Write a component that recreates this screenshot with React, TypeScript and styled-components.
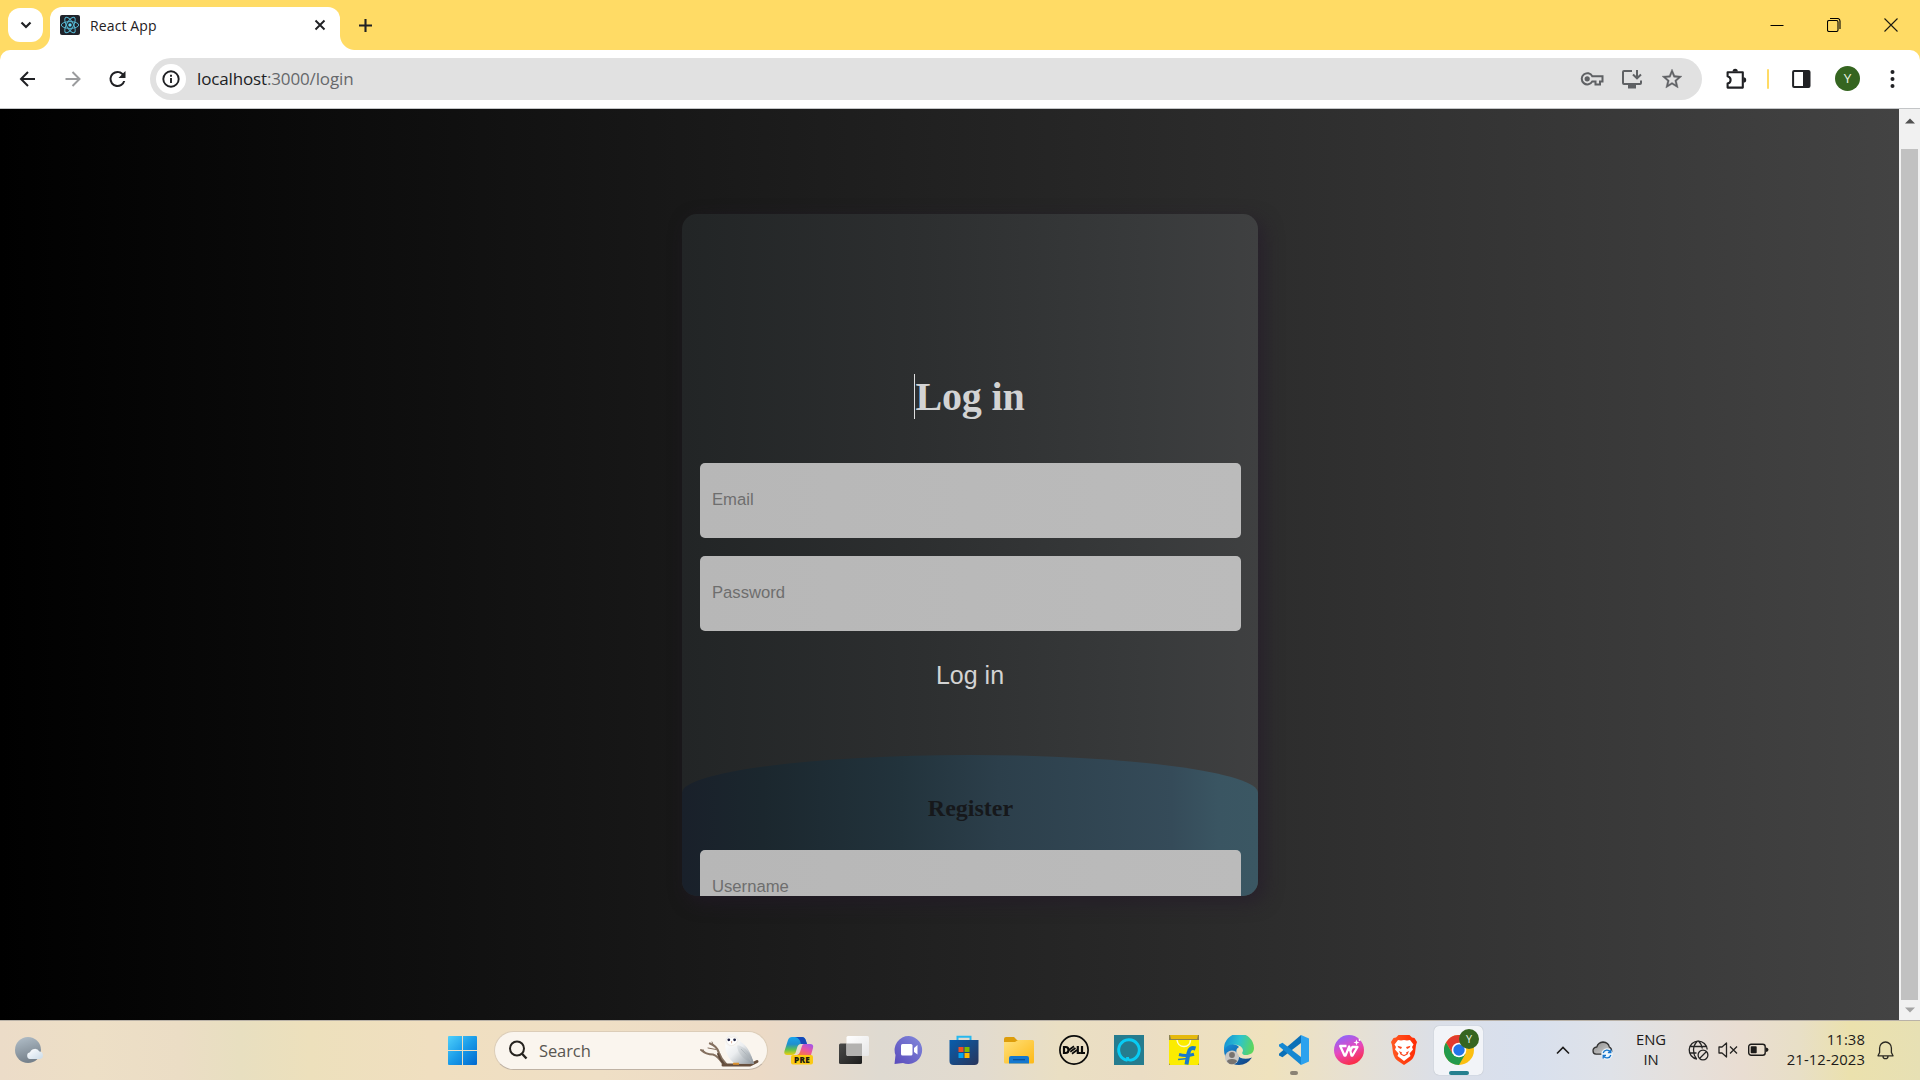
import React from 'react';
import styled, { createGlobalStyle } from 'styled-components';

const ui = '"Open Sans", "Noto Sans", sans-serif';

const GlobalStyle = createGlobalStyle`
  * { box-sizing: border-box; }
  html, body { margin: 0; padding: 0; overflow: hidden; }
  svg { display: block; flex: none; }
`;

const Screen = styled.div`
  width: 1920px;
  height: 1080px;
  display: flex;
  flex-direction: column;
  background: #000;
  font-family: ${ui};
`;

/* ---------- browser chrome ---------- */

const TabStrip = styled.header`
  height: 50px;
  display: flex;
  align-items: flex-start;
  background: #ffdb65;
  padding-left: 8px;
`;

const TabSearch = styled.button`
  width: 35px;
  height: 34px;
  margin: 8px 7px 0 0;
  padding: 0;
  border: 0;
  border-radius: 12px;
  background: #fff;
  display: grid;
  place-items: center;
`;

const Tab = styled.div`
  position: relative;
  width: 290px;
  height: 43px;
  margin-top: 7px;
  padding: 0 13px 7px 10px;
  display: flex;
  align-items: center;
  background: #fff;
  border-radius: 12px 12px 0 0;
  &::before, &::after {
    content: '';
    position: absolute;
    bottom: 0;
    width: 15px;
    height: 15px;
  }
  &::before {
    left: -15px;
    background: radial-gradient(circle at 0 0, transparent 14.5px, #fff 15.5px);
  }
  &::after {
    right: -15px;
    background: radial-gradient(circle at 100% 0, transparent 14.5px, #fff 15.5px);
  }
`;

const TabTitle = styled.span`
  flex: 1;
  margin-left: 10px;
  padding-top: 1px;
  font-size: 14px;
  line-height: 20px;
  letter-spacing: 0.12px;
  color: #1f2023;
`;

const NewTab = styled.div`
  margin: 18px 0 0 18px;
`;

const WindowControls = styled.div`
  margin-left: auto;
  height: 49px;
  display: flex;
  align-items: center;
  gap: 43px;
  padding-right: 22px;
`;

const ToolbarBack = styled.div`
  background: #ffdb65;
`;

const Toolbar = styled.div`
  height: 59px;
  display: flex;
  align-items: center;
  padding: 0 17px 1px 16px;
  background: #fff;
  border-bottom: 1px solid #c3c5c7;
  border-radius: 10px 10px 0 0;
`;

const NavIcons = styled.div`
  display: flex;
  gap: 21px;
  width: 134px;
`;

const Omnibox = styled.div`
  width: 1552px;
  height: 42px;
  border-radius: 21px;
  background: #e1e1e1;
  display: flex;
  align-items: center;
  padding: 0 18px 0 6px;
`;

const SiteInfo = styled.div`
  width: 30px;
  height: 30px;
  border-radius: 50%;
  background: #fff;
  display: grid;
  place-items: center;
`;

const Url = styled.span`
  flex: 1;
  margin-left: 11px;
  padding-top: 1px;
  font-size: 17px;
  line-height: 24px;
  letter-spacing: -0.14px;
  color: #66686b;
  b { font-weight: 400; color: #202124; }
`;

const OmniActions = styled.div`
  display: flex;
  align-items: center;
  gap: 17px;
`;

const ToolbarActions = styled.div`
  flex: 1;
  display: flex;
  align-items: center;
  padding-left: 23px;
`;

const ThemeDivider = styled.i`
  width: 2px;
  height: 20px;
  margin: 0 21px 0 20px;
  border-radius: 1px;
  background: #ffdb65;
`;

const Avatar = styled.span<{ $size: number }>`
  width: ${p => p.$size}px;
  height: ${p => p.$size}px;
  border-radius: 50%;
  background: #356520;
  color: #e9f3e2;
  font: 400 ${p => p.$size * 0.54}px/${p => p.$size}px ${ui};
  text-align: center;
`;

/* ---------- page ---------- */

const Viewport = styled.main`
  height: 911px;
  display: flex;
`;

const Page = styled.div`
  flex: 1;
  display: flex;
  justify-content: center;
  padding: 105px 0 0 41px;
  background: linear-gradient(to right, #000000, #434343);
`;

const Card = styled.section`
  width: 576px;
  height: 682px;
  display: flex;
  flex-direction: column;
  overflow: hidden;
  border-radius: 15px;
  background: linear-gradient(to right, #222526 0%, #2d2f30 42%, #383a3b 80%, #3f4041 100%);
  box-shadow: 6px 6px 18px rgba(36, 25, 43, 0.6);
`;

const LoginForm = styled.div`
  height: 541px;
  padding: 160px 17px 0 18px;
  display: flex;
  flex-direction: column;
  align-items: center;
  flex: none;
`;

const Title = styled.h1`
  margin: 0 2px 44px 0;
  border-left: 1px solid #dedede;
  height: 45px;
  font: 700 40px/45px "Liberation Serif", serif;
  letter-spacing: -0.15px;
  color: #d3d3d3;
`;

const Field = styled.div`
  align-self: stretch;
  height: 75px;
  margin-bottom: 18px;
  flex: none;
  padding-left: 12px;
  border-radius: 5px;
  background: linear-gradient(to right, #b7b7b7, #bbbbbb);
  font: 400 16.67px/73px "Liberation Sans", sans-serif;
  color: #6e6e6e;
`;

const Submit = styled.button`
  margin: 12px 1px 0 0;
  padding: 0;
  border: 0;
  background: none;
  font: 400 25px/29px "Liberation Sans", sans-serif;
  color: #d3d3d3;
`;

const RegisterForm = styled.div`
  height: 456px;
  flex: none;
  padding: 40px 17px 0 18px;
  border-radius: 50% / 38px;
  background: linear-gradient(to right, #19202a 0%, #1b272e 14%, #22333c 38%, #2c3f4b 55%, #354b59 85%, #3a5562 93%, #3b5763 100%);
`;

const Subtitle = styled.h2`
  margin: 0 0 28px;
  font: 700 24px/27px "Liberation Serif", serif;
  text-align: center;
  color: #16181b;
`;

const Scrollbar = styled.div`
  width: 21px;
  display: flex;
  flex-direction: column;
  align-items: center;
  padding: 9px 0 0;
  background: #f1f1f1;
`;

const Thumb = styled.div`
  width: 17px;
  height: 851px;
  margin: 25px 0 7px;
  background: #c1c1c1;
`;

/* ---------- taskbar ---------- */

const Taskbar = styled.footer`
  height: 60px;
  display: flex;
  align-items: center;
  padding-bottom: 1px;
  border-top: 1px solid #b9b2a8;
  background: linear-gradient(to right,
    #ecdcc8 0, #eddfc6 90px, #ebddc5 180px, #e8dfc0 240px, #ede0bc 310px,
    #f0dfc0 430px, #efdfc5 600px, #ecdac6 760px, #dfdad1 880px, #e2dbcf 980px,
    #eadfc3 1060px, #ebddc4 1140px, #efe2bd 1270px, #e6e0d4 1360px, #dbdfe8 1440px,
    #d8e0ee 1530px, #dfe2e8 1610px, #e5e0dc 1680px, #e9ddd2 1740px, #e8dfc6 1800px,
    #ebe1ad 1850px, #e7e0b4 1920px);
`;

const Weather = styled.div`
  width: 448px;
  padding-left: 15px;
`;

const SearchBox = styled.div`
  width: 274px;
  height: 39px;
  margin: 0 4px 0 17px;
  border: 1px solid #dccdb8;
  border-bottom-color: #bfb2a4;
  border-radius: 20px;
  background: #faf5ee;
  display: flex;
  align-items: center;
  padding: 0 7px 0 13px;
  overflow: hidden;
`;

const SearchText = styled.span`
  flex: 1;
  margin-left: 11px;
  font-size: 16.5px;
  letter-spacing: -0.1px;
  color: #595651;
`;

const AppSlot = styled.div<{ $active?: boolean; $mark?: string }>`
  position: relative;
  width: 49px;
  height: 49px;
  margin: 0 3px;
  border-radius: 5px;
  display: grid;
  place-items: center;
  background: ${p => (p.$active ? '#f2f4f8' : 'transparent')};
  box-shadow: ${p => (p.$active ? '0 0 1px #9aa0a8' : 'none')};
  &::after {
    content: '';
    display: ${p => (p.$mark ? 'block' : 'none')};
    position: absolute;
    bottom: 0;
    width: ${p => (p.$active ? 20 : 8)}px;
    height: 4px;
    border-radius: 2px;
    background: ${p => p.$mark};
  }
`;

const ProfileBadge = styled.span`
  position: absolute;
  left: 25px;
  top: 3px;
  display: flex;
`;

const AppRow = styled.nav`
  display: flex;
  margin-left: -1px;
`;

const Tray = styled.div`
  margin-left: auto;
  display: flex;
  align-items: center;
  padding-right: 26px;
`;

const TrayText = styled.div<{ $right?: boolean }>`
  font-size: 14.8px;
  line-height: 20px;
  text-align: ${p => (p.$right ? 'right' : 'center')};
  letter-spacing: ${p => (p.$right ? '0.1px' : '-0.1px')};
  color: #1d1b1a;
  white-space: nowrap;
  width: ${p => (p.$right ? 90 : 40)}px;
  padding-bottom: 2px;
  span { display: block; }
`;

const Gap = styled.i<{ $w: number }>`
  width: ${p => p.$w}px;
`;

/* ---------- drawings ---------- */

const ReactIcon = () => (
  <svg width="20" height="20" viewBox="0 0 20 20">
    <rect width="20" height="20" rx="2" fill="#20232a" />
    <g fill="none" stroke="#55b5cf" strokeWidth="1">
      <ellipse cx="10" cy="10" rx="8.7" ry="3.4" />
      <ellipse cx="10" cy="10" rx="8.7" ry="3.4" transform="rotate(60 10 10)" />
      <ellipse cx="10" cy="10" rx="8.7" ry="3.4" transform="rotate(120 10 10)" />
    </g>
    <circle cx="10" cy="10" r="1.7" fill="#61dafb" />
  </svg>
);

const Line = ({ d, w, h, s = 2, c = '#202124' }: { d: string; w: number; h: number; s?: number; c?: string }) => (
  <svg width={w} height={h} viewBox={`0 0 ${w} ${h}`} fill="none" stroke={c} strokeWidth={s}>
    <path d={d} />
  </svg>
);

const Reload = () => (
  <svg width="24" height="24" viewBox="0 0 24 24" fill="#202124">
    <path d="M17.15 6.35A7.96 7.96 0 0 0 11.500 4a8 8 0 1 0 7.73 10h-2.08A6 6 0 1 1 11.500 6c1.66 0 3.14.69 4.22 1.78L12.500 11h7V4z" />
  </svg>
);

const Info = () => (
  <svg width="18" height="18" viewBox="0 0 18 18">
    <circle cx="9" cy="9" r="7.7" fill="none" stroke="#202124" strokeWidth="1.9" />
    <path d="M9 8v5M9 4.8v2" stroke="#202124" strokeWidth="1.9" />
  </svg>
);

const KeyIcon = () => (
  <svg width="24" height="16" viewBox="0 0 24 16" fill="none" stroke="#5f6164" strokeWidth="2">
    <path d="M12.3 5.200A5.600 5.600 0 1 0 12.300 10.400H15.500V13.400H20V10.400H22.500V5.200Z" />
    <circle cx="7.200" cy="7.800" r="2.600" fill="#5f6164" stroke="none" />
  </svg>
);

const Install = () => (
  <svg width="22" height="20" viewBox="0 0 22 20" fill="none" stroke="#5f6164" strokeWidth="2">
    <path d="M11 2H3Q2 2 2 3V14Q2 15 3 15H19Q20 15 20 14V11.5" />
    <path d="M16 1V9M12 5.5L16 9.3L20 5.5" />
    <path d="M7 17.5H15" strokeWidth="4" />
  </svg>
);

const Star = () => (
  <svg width="24" height="24" viewBox="0 0 24 24" fill="#5f6164" stroke="#5f6164" strokeWidth=".35">
    <path d="M22 9.24l-7.19-.62L12 2 9.19 8.63 2 9.24l5.46 4.73L5.82 21 12 17.27 18.18 21l-1.63-7.03L22 9.24zM12 15.4l-3.76 2.27 1-4.28-3.32-2.88 4.38-.38L12 6.1l1.71 4.04 4.38.38-3.32 2.88 1 4.28L12 15.4z" />
  </svg>
);

const Puzzle = () => (
  <svg width="22" height="22" viewBox="0 0 22 22">
    <path d="M2.600 4.200H17.800V19.600H2.600V15.600Q5.600 14.600 5.600 11.900T2.600 8.200Z" fill="none" stroke="#202124" strokeWidth="2.100" strokeLinejoin="round" />
    <path d="M7.600 3.500a2.600 2.700 0 0 1 5.200 0zM18.500 9.300a2.700 2.600 0 0 1 0 5.200z" fill="#202124" />
  </svg>
);

const SidePanel = () => (
  <svg width="19" height="18" viewBox="0 0 19 18">
    <rect x="1.1" y="1.1" width="16.4" height="15.8" rx="1" fill="none" stroke="#202124" strokeWidth="2" />
    <path d="M11 1H18V17H11Z" fill="#202124" />
  </svg>
);

const WindowsLogo = () => (
  <svg width="29" height="29" viewBox="0 0 29 29">
    <defs>
      <linearGradient id="win" x1="0" y1="0" x2="1" y2="1" gradientUnits="objectBoundingBox">
        <stop offset="0" stopColor="#4fd0fb" />
        <stop offset=".5" stopColor="#1a9be8" />
        <stop offset="1" stopColor="#0068cf" />
      </linearGradient>
    </defs>
    <path d="M1 0H14V14H0V1Q0 0 1 0ZM15 0H28Q29 0 29 1V14H15ZM0 15H14V29H1Q0 29 0 28ZM15 15H29V28Q29 29 28 29H15Z" fill="url(#win)" />
  </svg>
);

const WeatherIcon = () => (
  <svg width="30" height="28" viewBox="0 0 30 28">
    <defs>
      <linearGradient id="moon" x1="0" y1="0" x2=".3" y2="1">
        <stop offset="0" stopColor="#b3c0ca" />
        <stop offset="1" stopColor="#77828c" />
      </linearGradient>
      <linearGradient id="cl" x1="0" y1="0" x2="1" y2="1">
        <stop offset="0" stopColor="#fff" />
        <stop offset="1" stopColor="#cbdbe8" />
      </linearGradient>
    </defs>
    <circle cx="13" cy="14" r="13" fill="url(#moon)" />
    <path d="M15 23a3.400 3.400 0 0 1 0-6.700A5.200 5.200 0 0 1 24.400 15.500A3.800 3.800 0 0 1 25 23Z" fill="url(#cl)" />
  </svg>
);

const Owl = () => (
  <svg width="60" height="35" viewBox="0 0 60 35">
    <defs>
      <linearGradient id="owl" x1="0" y1="0" x2="1" y2=".8">
        <stop offset="0" stopColor="#ffffff" />
        <stop offset=".45" stopColor="#eceef0" />
        <stop offset="1" stopColor="#9aa3ab" />
      </linearGradient>
      <linearGradient id="owlWing" x1="0" y1="0" x2="1" y2="1">
        <stop offset="0" stopColor="#e6e9eb" />
        <stop offset="1" stopColor="#8d969e" />
      </linearGradient>
    </defs>
    <g fill="none" stroke="#84705f" strokeLinecap="round">
      <path d="M1 17Q6 21.500 13 21.500Q18 23 23 31" strokeWidth="1.900" />
      <path d="M10 10.500Q17 13 19 20Q21 26 26 31" strokeWidth="2.300" />
      <path d="M5 20L3 16.500M13.500 12.500L12 9M8 15L16 16.500" strokeWidth="1" />
      <path d="M18 21Q20 27 24 31" stroke="#5d4838" strokeWidth="2" />
      <path d="M23 32H50L57 28.500" strokeWidth="3" stroke="#68503e" />
    </g>
    <path d="M25.500 10C27 12 38 12 40 8.500C47 12 51 20 54 31C47 30 42 31.500 35 30.500C28 26 24.500 18 25.500 10Z" fill="url(#owl)" />
    <path d="M37 12C45 13 52 22 54 31C46 28.500 37 21 37 12Z" fill="url(#owlWing)" />
    <path d="M41 16Q47 21 51 28" fill="none" stroke="#aeb5ba" strokeWidth=".8" />
    <path d="M25 8Q25.500 1 32 1Q39 1 40.500 8.500Q38 14 32 14Q26 14 25 8Z" fill="#f6f5f3" />
    <path d="M26 7Q27.500 2.500 31.500 4.500Q35.500 2.500 38 7Q36 12 31.500 12.500Q27 12 26 7Z" fill="#fff" stroke="#e3dcd5" strokeWidth=".5" />
    <circle cx="28.800" cy="6.800" r="1.400" fill="#1d2140" />
    <circle cx="34.600" cy="6.800" r="1.400" fill="#1d2140" />
    <path d="M31.600 8v2.300" stroke="#d9b29e" />
    <path d="M33 30.700H39" stroke="#dc9230" strokeWidth="2" />
  </svg>
);

const Copilot = () => (
  <svg width="30" height="30" viewBox="0 0 30 30">
    <defs>
      <linearGradient id="cpA" x1="0" y1="0" x2="0" y2="1">
        <stop offset="0" stopColor="#17a5ec" /><stop offset=".4" stopColor="#1f8fce" /><stop offset=".7" stopColor="#5fc04f" /><stop offset="1" stopColor="#f2cf0e" />
      </linearGradient>
      <linearGradient id="cpB" x1=".8" y1="0" x2=".2" y2="1">
        <stop offset="0" stopColor="#a455e8" /><stop offset=".5" stopColor="#e955a2" /><stop offset="1" stopColor="#fb7a3c" />
      </linearGradient>
    </defs>
    <path d="M8 2H18Q21 2 22 6L23 9H17Q14 9 13 13L11.500 18Q10.500 20 8 20H3Q-.5 20 .5 16L4 5Q5 2 8 2Z" fill="url(#cpA)" />
    <path d="M11 2H18Q21 2 22 6L23 9H17Q16 3 11 2Z" fill="#1649b8" />
    <path d="M20 9H26Q30 9 29 13L27 20H13Q15 20 16 17L18 11Q18.500 9 20 9Z" fill="url(#cpB)" />
    <rect x="7" y="20" width="22" height="9.500" rx="2" fill="#fbc914" />
    <text x="18" y="27.900" textAnchor="middle" fontFamily="Open Sans, sans-serif" fontWeight="800" fontSize="8.200" letterSpacing=".2" fill="#201b10">PRE</text>
  </svg>
);

const TaskView = () => (
  <svg width="30" height="30" viewBox="0 0 30 30">
    <defs>
      <linearGradient id="tvD" x1="0" y1="0" x2="1" y2="1"><stop offset="0" stopColor="#4b4b4a" /><stop offset="1" stopColor="#1d1d1d" /></linearGradient>
      <linearGradient id="tvL" x1="0" y1="0" x2="1" y2="1"><stop offset="0" stopColor="#fff" /><stop offset="1" stopColor="#e6e6e6" /></linearGradient>
    </defs>
    <rect x="0" y="8.500" width="23" height="20.500" rx="1.500" fill="url(#tvD)" />
    <rect x="7.500" y="1" width="22.500" height="20" rx="1.500" fill="url(#tvL)" />
    <path d="M7.500 8.500H23V21H9Q7.500 21 7.500 19.500Z" fill="#b3b2b0" />
  </svg>
);

const Chat = () => (
  <svg width="30" height="30" viewBox="0 0 30 30">
    <defs><linearGradient id="chat" x1="1" y1="0" x2="0" y2="1"><stop offset="0" stopColor="#8289dc" /><stop offset="1" stopColor="#5a4bbb" /></linearGradient></defs>
    <path d="M15 1A14 14 0 1 1 9 28L.5 29L1.500 20A14 14 0 0 1 15 1Z" fill="url(#chat)" />
    <rect x="7" y="9" width="11.500" height="11.500" rx="1.500" fill="#fff" />
    <path d="M20 13L23.500 10V19.500L20 17Z" fill="#fff" />
  </svg>
);

const Store = () => (
  <svg width="30" height="30" viewBox="0 0 30 30">
    <defs><linearGradient id="store" x1="0" y1="0" x2="1" y2="1"><stop offset="0" stopColor="#075eae" /><stop offset="1" stopColor="#29355b" /></linearGradient></defs>
    <path d="M8.500 6V1.800H21.500V6" fill="none" stroke="#28b8ee" strokeWidth="2" />
    <path d="M.5 5H29.500V26Q29.500 30 25.500 30H4.500Q.5 30 .5 26Z" fill="url(#store)" />
    <path d="M9.500 12H14.500V17H9.500Z" fill="#f25022" /><path d="M15.500 12H20.500V17H15.500Z" fill="#7fba00" />
    <path d="M9.500 18H14.500V23H9.500Z" fill="#00a4ef" /><path d="M15.500 18H20.500V23H15.500Z" fill="#ffb900" />
  </svg>
);

const Explorer = () => (
  <svg width="30" height="30" viewBox="0 0 30 30">
    <defs><linearGradient id="fold" x1="0" y1="0" x2="1" y2="1"><stop offset="0" stopColor="#ffe07a" /><stop offset="1" stopColor="#fdb916" /></linearGradient></defs>
    <path d="M0 4Q0 2 2 2H10L13 5H28V12H0Z" fill="#dd9d0b" />
    <path d="M0 7H11L14 5H28.500Q30 5 30 6.500V27Q30 28.500 28.500 28.500H1.500Q0 28.500 0 27Z" fill="url(#fold)" />
    <path d="M5 28.500V23Q5 21 7 21H23Q25 21 25 23V28.500Z" fill="#1478cf" />
    <path d="M9 24.700H21" stroke="#0b4f94" strokeWidth="1.200" />
  </svg>
);

const Dell = () => (
  <svg width="30" height="30" viewBox="0 0 30 30">
    <circle cx="15" cy="15" r="14.100" fill="none" stroke="#0b0b0a" strokeWidth="1.700" />
    <g fill="none" stroke="#0b0b0a" strokeWidth="2.200">
      <path d="M5 12V18H6.500Q9.500 18 9.500 15T6.500 12Z" />
      <path d="M9.500 15.200L15 11.200M11.300 16.800L16.500 13M13 18.800L18 15" strokeWidth="1.700" />
      <path d="M18.800 11V18H21.800M23 11V18H26" />
    </g>
  </svg>
);

const Alexa = () => (
  <svg width="30" height="30" viewBox="0 0 30 30">
    <rect width="30" height="30" fill="#257c8f" />
    <path d="M13.500 25.200A10.300 10.300 0 1 1 17 25.100Q13.500 25.500 13.500 22" fill="none" stroke="#08ccf4" strokeWidth="2.900" />
  </svg>
);

const Flipkart = () => (
  <svg width="30" height="30" viewBox="0 0 30 30">
    <rect width="30" height="30" fill="#8c8250" />
    <path d="M1 0H29L28 4H2Z" fill="#e5b90d" /><path d="M0 5H30V28L29 30H1L0 28Z" fill="#fbec00" />
    <path d="M8 5Q9 11.500 15 11.500T21.500 5" fill="none" stroke="#fffbd0" strokeWidth="1.500" />
    <path d="M26.500 13.500Q20.500 11.500 19.500 18L17.500 29.500" fill="none" stroke="#1979c9" strokeWidth="4" />
    <path d="M10 19.500Q17 21.500 25 19.200" fill="none" stroke="#1979c9" strokeWidth="3" />
    <path d="M9 24.500L19 23.500" stroke="#1979c9" strokeWidth="1.600" />
  </svg>
);

const Edge = () => (
  <svg width="30" height="30" viewBox="0 0 30 30">
    <defs>
      <linearGradient id="edA" x1="0" y1=".3" x2="1" y2=".5"><stop offset="0" stopColor="#1690d4" /><stop offset=".5" stopColor="#2cc3cf" /><stop offset="1" stopColor="#5ed65b" /></linearGradient>
      <linearGradient id="edB" x1="0" y1="0" x2="1" y2="1"><stop offset="0" stopColor="#1791dc" /><stop offset="1" stopColor="#123c7c" /></linearGradient>
    </defs>
    <path d="M0 14A15 15 0 0 1 30 13C30 18 26 20 22 20C18 20 17.500 18 19 16C19 11 13 9 9 10Q3 11 0 16Z" fill="url(#edA)" />
    <path d="M0 15C3 9 11 8 15 12Q11 14 13 19C15 24 22 25 28 22.500Q23 30 15 30C6 30 0 23 0 15Z" fill="url(#edB)" />
    <circle cx="8" cy="22.500" r="7" fill="#c9c8c5" />
    <circle cx="8" cy="20" r="2.900" fill="#77736f" />
    <path d="M3 26.500Q3 24 8 24T13 26.500Q11 29.200 8 29.300T3 26.500Z" fill="#77736f" />
  </svg>
);

const VSCode = () => (
  <svg width="30" height="30" viewBox="0 0 30 30">
    <path d="M22 0L22 8L3.500 22.300L0 20.500V18.700Z" fill="#0b70b7" />
    <path d="M22 30V22L3.500 7.700L0 9.500V11.300Z" fill="#1688d2" />
    <path d="M22 0L30 3.500V26.500L22 30Z" fill="#2da2ee" />
  </svg>
);

const Wps = () => (
  <svg width="30" height="30" viewBox="0 0 30 30">
    <defs><linearGradient id="wps" x1=".2" y1="0" x2=".6" y2="1"><stop offset="0" stopColor="#8768ff" /><stop offset=".5" stopColor="#e548c0" /><stop offset="1" stopColor="#fc2c40" /></linearGradient></defs>
    <circle cx="15" cy="15" r="15" fill="url(#wps)" />
    <path d="M12.500 11H6.200L10.500 20.500H11.500L15.200 11.500L17.500 20.500H18.500L23.500 12H18.300L16.500 15.500" fill="none" stroke="#fff" strokeWidth="2.300" strokeLinejoin="round" />
    <path d="M22.500 4.500L23.300 6.700L25.500 7.500L23.300 8.300L22.500 10.500L21.700 8.300L19.500 7.500L21.700 6.700Z" fill="#fff" />
    <circle cx="25.500" cy="5" r=".9" fill="#fff" />
  </svg>
);

const Brave = () => (
  <svg width="26" height="30" viewBox="0 0 26 30">
    <defs><linearGradient id="brave" x1="0" y1="0" x2="1" y2="0"><stop offset="0" stopColor="#ff5a23" /><stop offset="1" stopColor="#ff2a03" /></linearGradient></defs>
    <path d="M7.500 0H18.500L21 2.500L23.500 3L26 7L25 10L24 18Q23 23 19 26L13 30L7 26Q3 23 2 18L1 10L0 7L2.500 3L5 2.500Z" fill="url(#brave)" />
    <path d="M7 5L10 5.500L13 5L16 5.500L19 5L22.500 9.500L21 12L22 14.500L18.500 18.500L19.500 21L13 26L6.500 21L7.500 18.500L4 14.500L5 12L3.500 9.500Z" fill="#fff" />
    <path d="M6.500 10.800L11 12L10 14L7.500 12.800ZM19.500 10.800L15 12L16 14L18.500 12.800ZM8 16L11 17.500L10.500 18.800L13 20L15.500 18.800L15 17.500L18 16L16.500 19.500L13 21.300L9.500 19.500Z" fill="#fb4820" />
  </svg>
);

const Chrome = () => (
  <svg width="30" height="30" viewBox="0 0 30 30">
    <circle cx="15" cy="15" r="15" fill="#fbbf12" />
    <path d="M2 7.500A15 15 0 0 1 28 7.500L15 7.800L8.500 18.700Z" fill="#e23b2e" />
    <path d="M2 7.500A15 15 0 0 0 15 30L21.500 18.700H8.500Z" fill="#229a4c" />
    <circle cx="15" cy="15" r="7.300" fill="#fff" />
    <circle cx="15" cy="15" r="5.700" fill="#2275e8" />
  </svg>
);

const OneDrive = () => (
  <svg width="21" height="20" viewBox="0 0 21 20">
    <defs><linearGradient id="od" x1="0" y1="0" x2="1" y2="1"><stop offset="0" stopColor="#8b8b8b" /><stop offset="1" stopColor="#d5d5d5" /></linearGradient></defs>
    <path d="M4 14.200Q1 14 1 10.800Q1 7.500 4.800 7Q6 2.500 11 2Q16.500 2.500 17.300 7Q19.700 8 19.700 11.500L14 14.200Z" fill="url(#od)" stroke="#333" strokeWidth="1.300" />
    <circle cx="15" cy="14" r="5.700" fill="#eef6fc" />
    <path d="M11.200 13A4 4 0 0 1 18.500 12M18.800 15A4 4 0 0 1 11.500 16M18.800 9.500V12.500H15.900M11.200 18.500V15.500H14" fill="none" stroke="#1675cc" strokeWidth="1.300" />
  </svg>
);

const Globe = () => (
  <svg width="21" height="21" viewBox="0 0 21 21" fill="none" stroke="#242424" strokeWidth="1.300">
    <path d="M9 19A9 9 0 1 1 19.200 9.500M9.500 1Q5.500 5 5.500 10T8.500 19M10.500 1Q14 4.500 14.300 8.500M1.800 6.500H18.300M1.800 13H8.500" />
    <circle cx="15" cy="15" r="4.900" />
    <path d="M11.500 18.500L18.500 11.500" />
  </svg>
);

const Mute = () => (
  <svg width="20" height="18" viewBox="0 0 20 18" fill="none" stroke="#262422" strokeWidth="1.300">
    <path d="M1 6H4L8.500 2V16L4 12H1Z" strokeLinejoin="round" />
    <path d="M12 5.500L19 12.500M19 5.500L12 12.500" />
  </svg>
);

const Battery = () => (
  <svg width="21" height="14" viewBox="0 0 21 14">
    <rect x=".7" y="1.200" width="16.500" height="11" rx="2.500" fill="none" stroke="#1d1b1a" strokeWidth="1.400" />
    <rect x="2.700" y="3.200" width="6" height="7" rx=".8" fill="#1d1b1a" />
    <path d="M18 4.500Q20.500 5 20.500 6.700T18 9Z" fill="#1d1b1a" />
  </svg>
);

const Bell = () => (
  <svg width="17" height="19" viewBox="0 0 17 19" fill="none" stroke="#2b2922" strokeWidth="1.300">
    <path d="M1 14.800L2.600 11.500V7A5.900 6 0 0 1 14.400 7V11.500L16 14.800ZM6 15.200A2.500 2.500 0 0 0 11 15.200" strokeLinejoin="round" />
  </svg>
);

const apps: { icon: React.ReactNode; mark?: string; active?: boolean }[] = [
  { icon: <Copilot /> }, { icon: <TaskView /> }, { icon: <Chat /> }, { icon: <Store /> },
  { icon: <Explorer /> }, { icon: <Dell /> }, { icon: <Alexa /> }, { icon: <Flipkart /> },
  { icon: <Edge /> }, { icon: <VSCode />, mark: '#8a8274' }, { icon: <Wps /> }, { icon: <Brave /> },
  { icon: <Chrome />, mark: '#25808f', active: true },
];

export default function App() {
  return (
    <Screen>
      <GlobalStyle />
      <TabStrip>
        <TabSearch><Line w={12} h={10} d="M1.500 2.500L6 7L10.500 2.500" s={2.2} /></TabSearch>
        <Tab>
          <ReactIcon />
          <TabTitle>React App</TabTitle>
          <Line w={14} h={14} d="M2.500 2.500L11.500 11.500M11.500 2.500L2.500 11.500" s={1.9} />
        </Tab>
        <NewTab><Line w={15} h={15} d="M7.500 1V14M1 7.500H14" s={2.1} /></NewTab>
        <WindowControls>
          <Line w={14} h={14} d="M0.500 7.500H13.500" s={1} c="#000" />
          <Line w={14} h={14} d="M0.500 4Q.5 2.500 2 2.500H9.500Q11 2.500 11 4V12Q11 13.500 9.500 13.500H2Q.5 13.500 .5 12ZM3 .5H10.500Q13 .5 13 3V11" s={1.1} c="#000" />
          <Line w={14} h={14} d="M.5 .5L13.500 13.500M13.500 .5L.5 13.500" s={1.1} c="#1b1a12" />
        </WindowControls>
      </TabStrip>
      <ToolbarBack>
        <Toolbar>
          <NavIcons>
            <Line w={24} h={24} d="M19 12H5.500M12 5L5 12L12 19" />
            <Line w={24} h={24} d="M4.500 12H18M11.500 5L18.500 12L11.500 19" c="#9b9c9e" />
            <Reload />
          </NavIcons>
          <Omnibox>
            <SiteInfo><Info /></SiteInfo>
            <Url><b>localhost</b>:3000/login</Url>
            <OmniActions><KeyIcon /><Install /><Star /></OmniActions>
          </Omnibox>
          <ToolbarActions>
            <Puzzle />
            <ThemeDivider />
            <Gap $w={2} />
            <SidePanel />
            <Gap $w={24} />
            <Avatar $size={25}>Y</Avatar>
            <Gap $w={30} />
            <svg width="5" height="20" viewBox="0 0 5 20" fill="#202124">
              <circle cx="2.500" cy="3" r="2" /><circle cx="2.500" cy="10" r="2" /><circle cx="2.500" cy="17" r="2" />
            </svg>
          </ToolbarActions>
        </Toolbar>
      </ToolbarBack>

      <Viewport>
        <Page>
          <Card>
            <LoginForm>
              <Title>Log in</Title>
              <Field>Email</Field>
              <Field>Password</Field>
              <Submit>Log in</Submit>
            </LoginForm>
            <RegisterForm>
              <Subtitle>Register</Subtitle>
              <Field>Username</Field>
            </RegisterForm>
          </Card>
        </Page>
        <Scrollbar>
          <svg width="10" height="6" viewBox="0 0 10 6"><path d="M0 5.500L5 .5L10 5.500Z" fill="#505050" /></svg>
          <Thumb />
          <svg width="10" height="6" viewBox="0 0 10 6"><path d="M0 .5L5 5.500L10 .5Z" fill="#a3a3a3" /></svg>
        </Scrollbar>
      </Viewport>

      <Taskbar>
        <Weather><WeatherIcon /></Weather>
        <WindowsLogo />
        <SearchBox>
          <svg width="20" height="20" viewBox="0 0 20 20" fill="none" stroke="#26231f" strokeWidth="2">
            <circle cx="9" cy="8.500" r="7" /><path d="M13.800 13.500L18.500 18.500" strokeWidth="2.400" />
          </svg>
          <SearchText>Search</SearchText>
          <Owl />
        </SearchBox>
        <AppRow>
          {apps.map((a, i) => (
            <AppSlot key={i} $active={a.active} $mark={a.mark}>
              {a.icon}
              {a.active && <ProfileBadge><Avatar $size={20}>Y</Avatar></ProfileBadge>}
            </AppSlot>
          ))}
        </AppRow>
        <Tray>
          <Line w={14} h={9} d="M1 7.500L7 1.500L13 7.500" s={1.6} c="#1d1b1a" />
          <Gap $w={22} />
          <OneDrive />
          <Gap $w={18} />
          <TrayText><span>ENG</span><span>IN</span></TrayText>
          <Gap $w={17} />
          <Globe />
          <Gap $w={9} />
          <Mute />
          <Gap $w={10} />
          <Battery />
          <Gap $w={6} />
          <TrayText $right><span>11:38</span><span>21-12-2023</span></TrayText>
          <Gap $w={12} />
          <Bell />
        </Tray>
      </Taskbar>
    </Screen>
  );
}
